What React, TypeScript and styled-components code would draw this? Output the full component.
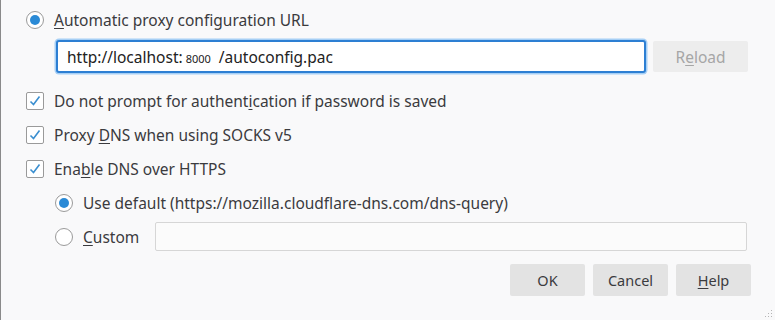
import React from 'react';
import styled, { createGlobalStyle } from 'styled-components';

const GlobalStyle = createGlobalStyle`
  html, body {
    margin: 0;
    padding: 0;
    background: #f9f9fa;
  }
  body {
    font-family: 'Noto Sans', 'Open Sans', sans-serif;
    color: #3b3b3e;
  }
`;

const Dialog = styled.div`
  width: 775px;
  height: 320px;
  box-sizing: border-box;
  border-left: 1px solid #8a8a8a;
  background: #f9f9fa;
  position: relative;
  padding: 10px 0 0 25px;
  font-size: 15.5px;
`;

const Row = styled.div<{ $indent?: number; $mt?: number }>`
  display: flex;
  align-items: center;
  height: 20px;
  margin-left: ${(p) => p.$indent ?? 0}px;
  margin-top: ${(p) => p.$mt ?? 0}px;
`;

const Label = styled.span`
  margin-left: 10px;
  line-height: 20px;
  white-space: nowrap;
`;

const U = styled.span`
  text-decoration: underline;
  text-underline-offset: 2px;
`;

const RadioCircle = styled.span<{ $checked?: boolean }>`
  width: 18px;
  height: 18px;
  box-sizing: border-box;
  border-radius: 50%;
  border: 1px solid #9a9a9a;
  background: #fff;
  display: flex;
  align-items: center;
  justify-content: center;
  flex-shrink: 0;
  &::after {
    content: '';
    display: ${(p) => (p.$checked ? 'block' : 'none')};
    width: 10px;
    height: 10px;
    border-radius: 50%;
    background: #2a8ad6;
  }
`;

const CheckBox = styled.span`
  width: 18px;
  height: 18px;
  box-sizing: border-box;
  border: 1px solid #9a9a9a;
  border-radius: 2px;
  background: #fff;
  display: flex;
  align-items: center;
  justify-content: center;
  flex-shrink: 0;
`;

const UrlRow = styled.div`
  display: flex;
  align-items: center;
  margin: 10px 0 0 30px;
  height: 33px;
`;

const UrlField = styled.div`
  width: 590px;
  height: 33px;
  box-sizing: border-box;
  border: 2px solid #2d7fd3;
  border-radius: 3px;
  box-shadow: 0 0 0 1.5px #a6cff5;
  background: #fff;
  display: flex;
  align-items: center;
  padding-left: 9px;
  color: #222;
`;

const Port = styled.span`
  font-size: 11px;
  margin: 4px 8px 0 3px;
`;

const ReloadButton = styled.div`
  margin-left: 7px;
  width: 95px;
  height: 31px;
  border-radius: 2px;
  background: #ededed;
  color: #a6a6a6;
  display: flex;
  align-items: center;
  justify-content: center;
`;

const CustomRow = styled.div`
  display: flex;
  align-items: center;
  margin: 9px 0 0 29px;
  height: 29px;
`;

const CustomChoice = styled.div`
  display: flex;
  align-items: center;
  width: 100px;
  flex-shrink: 0;
`;

const CustomField = styled.div`
  width: 592px;
  height: 29px;
  box-sizing: border-box;
  border: 1px solid #d6d6d6;
  border-radius: 2px;
  background: #fbfbfb;
`;

const Footer = styled.div`
  display: flex;
  gap: 8px;
  margin: 13px 0 0 484px;
`;

const DlgButton = styled.div`
  width: 75px;
  height: 32px;
  border-radius: 2px;
  background: #e3e3e3;
  color: #3b3b3e;
  display: flex;
  align-items: center;
  justify-content: center;
  font-size: 14.5px;
`;

const Grip = styled.svg`
  position: absolute;
  right: 2px;
  bottom: 2px;
`;

const Check = () => (
  <svg width="14" height="14" viewBox="0 0 14 14">
    <path d="M2.5 7.5 L5.5 10.5 L11.5 2.5" fill="none" stroke="#3b8fd0" strokeWidth="1.6" />
  </svg>
);

const App = () => {
  return (
    <>
      <GlobalStyle />
      <Dialog>
        <Row>
          <RadioCircle $checked />
          <Label>
            <U>A</U>utomatic proxy configuration URL
          </Label>
        </Row>
        <UrlRow>
          <UrlField>
            http://localhost:<Port>8000</Port>/autoconfig.pac
          </UrlField>
          <ReloadButton>
            R<U>e</U>load
          </ReloadButton>
        </UrlRow>
        <Row $mt={18}>
          <CheckBox>
            <Check />
          </CheckBox>
          <Label>
            Do not prompt for authent<U>i</U>cation if password is saved
          </Label>
        </Row>
        <Row $mt={14}>
          <CheckBox>
            <Check />
          </CheckBox>
          <Label>
            Proxy <U>D</U>NS when using SOCKS v5
          </Label>
        </Row>
        <Row $mt={14}>
          <CheckBox>
            <Check />
          </CheckBox>
          <Label>
            Ena<U>b</U>le DNS over HTTPS
          </Label>
        </Row>
        <Row $indent={29} $mt={14}>
          <RadioCircle $checked />
          <Label>Use default (https://mozilla.cloudflare-dns.com/dns-query)</Label>
        </Row>
        <CustomRow>
          <CustomChoice>
            <RadioCircle />
            <Label>
              <U>C</U>ustom
            </Label>
          </CustomChoice>
          <CustomField />
        </CustomRow>
        <Footer>
          <DlgButton>OK</DlgButton>
          <DlgButton>Cancel</DlgButton>
          <DlgButton>
            <U>H</U>elp
          </DlgButton>
        </Footer>
        <Grip width="10" height="10" viewBox="0 0 10 10">
          <g fill="#b5b5b5">
            <rect x="8" y="2" width="1" height="1" />
            <rect x="5" y="5" width="1" height="1" />
            <rect x="8" y="5" width="1" height="1" />
            <rect x="2" y="8" width="1" height="1" />
            <rect x="5" y="8" width="1" height="1" />
            <rect x="8" y="8" width="1" height="1" />
          </g>
        </Grip>
      </Dialog>
    </>
  );
};

export default App;
